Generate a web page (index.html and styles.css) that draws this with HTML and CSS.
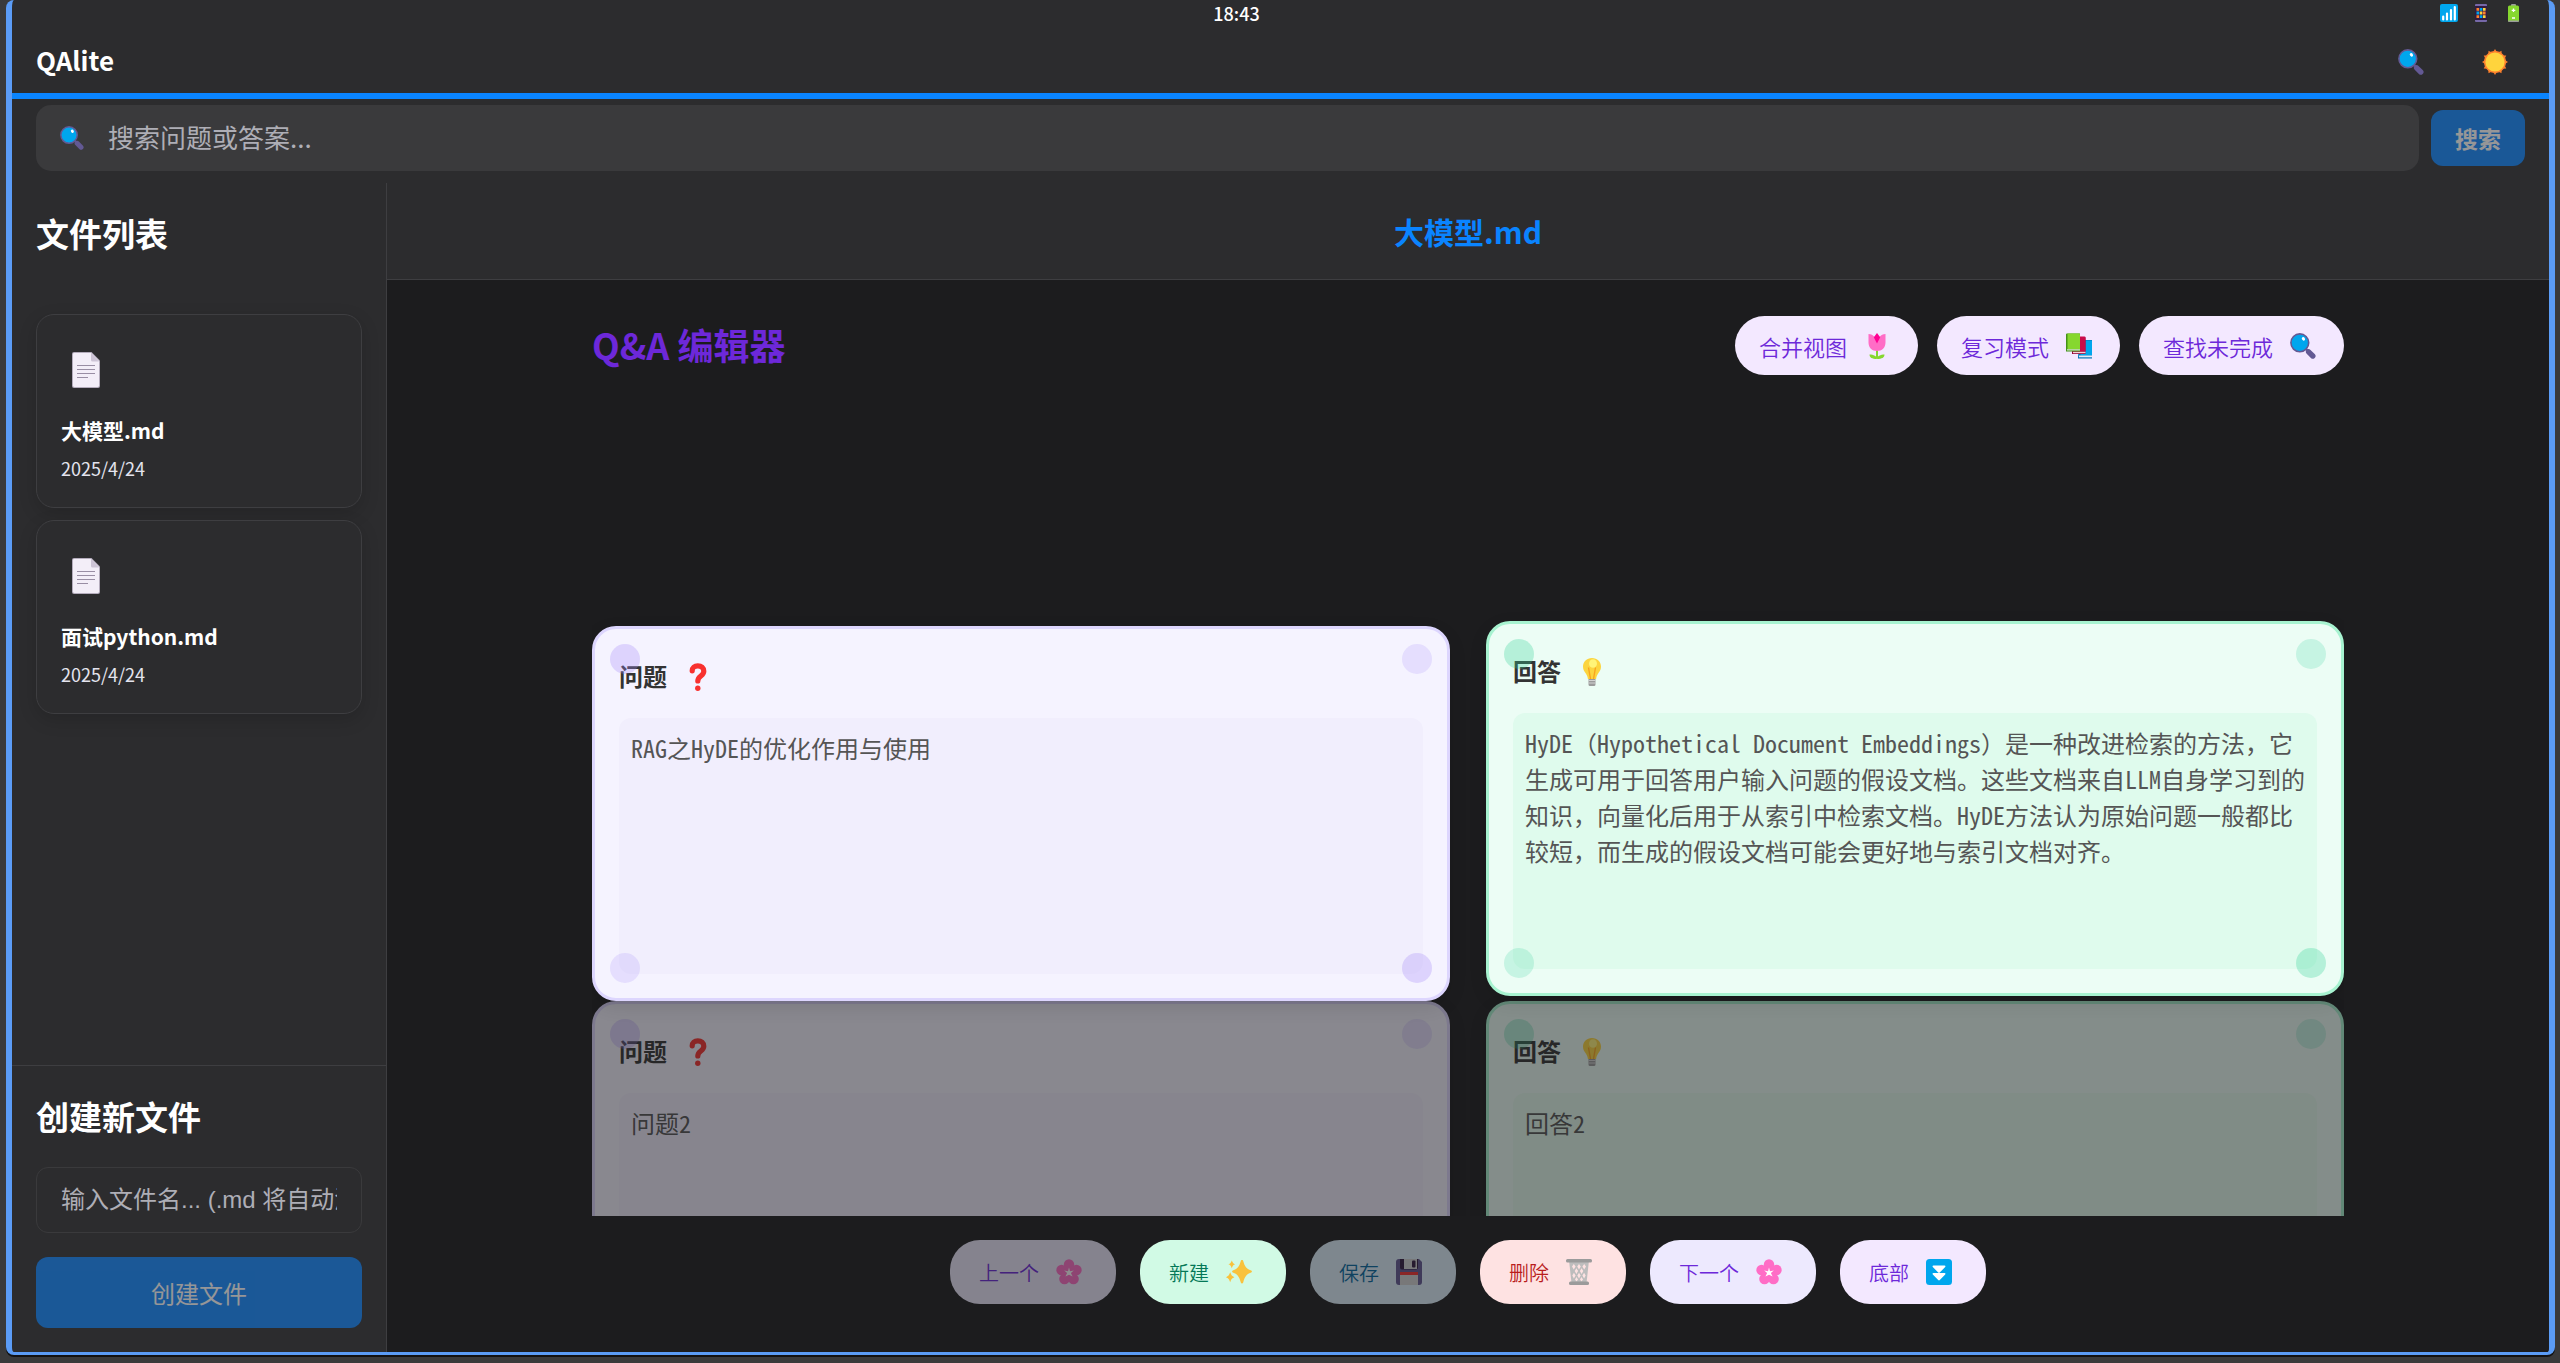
FILE: index.html
```html
<!DOCTYPE html>
<html lang="zh-CN">
<head>
<meta charset="utf-8">
<meta name="viewport" content="width=device-width, initial-scale=1">
<title>QAlite</title>
<link rel="stylesheet" href="styles.css">
</head>
<body>
<svg class="sprite" aria-hidden="true">
  <symbol id="i-search" viewBox="0 0 26 26">
    <path d="M16 16l2 2" stroke="#635994" stroke-width="2.4"/>
    <path d="M18.6 18.8l4.2 4.2" stroke="#635994" stroke-width="5.4" stroke-linecap="round"/>
    <circle cx="9.8" cy="9.8" r="8.9" fill="#00a6ed" stroke="#635994" stroke-width="1.6"/>
    <ellipse cx="13.4" cy="5.8" rx="1.5" ry="1.9" transform="rotate(-32 13.4 5.8)" fill="#fff"/>
  </symbol>
  <symbol id="i-sun" viewBox="0 0 26 26">
    <g fill="#ff822d">
      <circle cx="13" cy="13" r="11"/>
      <path d="M13 0l2.500 4h-5zM13 26l2.500-4h-5zM0 13l4-2.500v5zM26 13l-4-2.500v5z"/>
      <path d="M19.500 1.740l.17 4.710-4.340-2.500zM6.500 24.260l-.17-4.710 4.340 2.500zM1.740 6.500l4.710-.17-2.500 4.340zM24.260 19.500l-4.710.17 2.500-4.340zM24.260 6.500l-4.710-.17 2.500 4.340zM1.740 19.500l4.710.17-2.500-4.340zM6.500 1.740l-.17 4.710 4.340-2.500zM19.500 24.260l.17-4.710-4.340 2.500z"/>
    </g>
    <circle cx="13" cy="13" r="9.600" fill="#ffd43d"/>
  </symbol>
  <symbol id="i-signal" viewBox="0 0 18 18">
    <rect width="18" height="18" rx="2" fill="#00a6ed"/>
    <path d="M3.200 15.500v-3M7 15.500v-6M11 15.500V6M14.800 15.500V3" stroke="#fff" stroke-width="2.200" stroke-linecap="round"/>
  </symbol>
  <symbol id="i-phone" viewBox="0 0 12 18">
    <rect width="12" height="18" rx="1" fill="#7668a8"/>
    <rect y="2" width="12" height="14" fill="#321b41"/>
    <path d="M1.500 4h2.600v2.800H1.500zM8 7.600h2.600v2.800H8zM1.500 11.200h2.600V14H1.500z" fill="#ff822d"/>
    <path d="M4.800 4h2.600v2.800H4.800zM1.500 7.600h2.600v2.800H1.500zM4.800 11.200h2.600V14H4.800z" fill="#00a6ed"/>
    <path d="M8 4h2.600v2.800H8zM4.800 7.600h2.600v2.800H4.800zM8 11.200h2.600V14H8z" fill="#fcd53f"/>
  </symbol>
  <symbol id="i-battery" viewBox="0 0 11 18">
    <rect x="3" width="5" height="3" rx="1" fill="#9b9b9b"/>
    <rect y="1.500" width="11" height="16.500" rx="1.500" fill="#86d72f"/>
    <path d="M0 16.500h11v0a1.500 1.500 0 0 1-1.500 1.500h-8A1.500 1.500 0 0 1 0 16.500z" fill="#9b9b9b"/>
    <path d="M5.500 4.500v3.600M3.700 6.300h3.600M4 14h3" stroke="#fff" stroke-width="1.300"/>
  </symbol>
  <symbol id="i-doc" viewBox="0 0 28 36">
    <path d="M2 0h17.500L28 8.500V34a2 2 0 0 1-2 2H2a2 2 0 0 1-2-2V2a2 2 0 0 1 2-2z" fill="#b4acbc"/>
    <path d="M2 1h17l8 8v24.500a1.500 1.500 0 0 1-1.500 1.500h-23A1.500 1.500 0 0 1 1 33.500V2a1 1 0 0 1 1-1z" fill="#f3eef8"/>
    <path d="M19 1l8 8.500h-6.500A1.500 1.500 0 0 1 19 8z" fill="#cdc4d6"/>
    <path d="M5 13.500h18M5 17.500h18M5 21.500h18M5 25.500h11" stroke="#998ea4" stroke-width="1.200"/>
  </symbol>
  <symbol id="i-tulip" viewBox="0 0 26 26">
    <path d="M12 16h2v9h-2z" fill="#86d72f"/>
    <path d="M13 26c-5 0-7.500-1.500-7.500-4.500C9.500 21.500 13 23 13 26zM13 26c5 0 7.500-1.500 7.500-4.500C16.500 21.500 13 23 13 26z" fill="#86d72f"/>
    <path d="M4.500 1c2.600 0 4.500 1 6 3h5c1.500-2 3.400-3 6-3v8.500c0 5-3.500 8.500-8.500 8.500s-8.500-3.500-8.500-8.500z" fill="#ff6dc6"/>
    <path d="M13 0l3.200 4.200-3.200 6.300-3.200-6.300z" fill="#ff0093"/>
  </symbol>
  <symbol id="i-books" viewBox="0 0 26 26">
    <path d="M13 7h13v18.500H12z" fill="#0074ba"/>
    <path d="M14.500 7.500H26v15H14.500z" fill="#00a6ed"/>
    <path d="M13 22.500h13v1.800H13z" fill="#e8e8f5"/>
    <path d="M6 4h12.500a1 1 0 0 1 1 1v16H6z" fill="#990838"/>
    <path d="M8 3.500h10.500a1 1 0 0 1 1 1V18.500H8z" fill="#ca0b4a"/>
    <path d="M7 18.800h12.500v1.400H7z" fill="#f1d0db"/>
    <path d="M0 1.500a1 1 0 0 1 1-1h13V18.500H0z" fill="#44911b"/>
    <path d="M1.500.5H13a1 1 0 0 1 1 1v14.500H1.500z" fill="#86d72f"/>
    <path d="M1 16.200h13v1.300H1z" fill="#d3e8c8"/>
  </symbol>
  <symbol id="i-question" viewBox="0 0 26 28">
    <path d="M7.200 7.800c0-3 2.300-5 5.600-5 3.500 0 6 2.100 6 5.400 0 4.900-6 4.600-6 9.700" fill="none" stroke="#f8312f" stroke-width="5.200" stroke-linecap="round"/>
    <circle cx="12.800" cy="25.200" r="2.700" fill="#f8312f"/>
  </symbol>
  <symbol id="i-bulb" viewBox="0 0 26 28">
    <path d="M9.500 20h7v6.500a1.500 1.500 0 0 1-1.500 1.500h-4a1.500 1.500 0 0 1-1.500-1.500z" fill="#9b9b9b"/>
    <path d="M9.500 22.500h7M9.500 25h7" stroke="#d3d3d3" stroke-width="1"/>
    <path d="M13 0c5.200 0 9 3.700 9 8.700 0 3.300-1.700 5-3 7-1.300 1.900-1.700 3.500-1.900 5.300H8.900c-.2-1.800-.6-3.400-1.900-5.300-1.300-2-3-3.700-3-7C4 3.700 7.800 0 13 0z" fill="#fcd53f"/>
    <path d="M9.500 9.500L11.500 21M16.500 9.500L14.500 21" stroke="#f9a41f" stroke-width="1.400" fill="none"/>
    <ellipse cx="14" cy="5.500" rx="4" ry="4.300" fill="#fff478"/>
  </symbol>
  <symbol id="i-flower" viewBox="0 0 26 26">
    <g fill="#ff6dc6">
      <circle cx="13" cy="5.500" r="5.200"/><circle cx="5.600" cy="11" r="5.300"/><circle cx="20.400" cy="11" r="5.300"/>
      <circle cx="8.500" cy="20" r="5.300"/><circle cx="17.500" cy="20" r="5.300"/><circle cx="13" cy="13.500" r="6"/>
    </g>
    <path d="M13 8.500l1 3.700 3.800-.6-2.900 2.500 1.700 3.300-3.600-1.700-3.600 1.700 1.700-3.300-2.900-2.500 3.800.6z" fill="#fff"/>
  </symbol>
  <symbol id="i-sparkles" viewBox="0 0 26 26">
    <path d="M16 1c.8 0 1 .4 1.200 1 1.600 5.200 2.700 7.600 8 9.600 1 .4 1 1.600 0 2-5.300 2-6.400 4.400-8 10-.4 1.300-2 1.300-2.400 0-1.600-5.600-2.700-8-8-10-1-.4-1-1.600 0-2 5.300-2 6.400-4.400 8-9.600.2-.6.400-1 1.200-1zM5.800 1.500c1 2.600 1.400 2.900 3.400 3.800-2 .9-2.400 1.200-3.400 3.900-1-2.700-1.400-3-3.400-3.900 2-.9 2.400-1.200 3.400-3.800zM4.200 13.300c1.100 3 1.700 3.700 4.200 4.900-2.500 1.200-3.100 1.900-4.200 5-1.100-3.100-1.700-3.800-4.200-5 2.500-1.200 3.100-1.900 4.200-4.900z" fill="#f9c23c"/>
  </symbol>
  <symbol id="i-floppy" viewBox="0 0 26 26">
    <path d="M4 0h19l3 3v20a3 3 0 0 1-3 3H3a3 3 0 0 1-3-3V3a3 3 0 0 1 3-3z" fill="#635994"/>
    <path d="M4 0h18v8.500a2 2 0 0 1-2 2H6a2 2 0 0 1-2-2z" fill="#321b41"/>
    <path d="M8 0h13v10H8z" fill="#d3d3d3"/>
    <rect x="16" y="1.500" width="3.500" height="7" rx="1" fill="#321b41"/>
    <path d="M4 13.500h18V26H4z" fill="#d3d3d3"/>
    <path d="M4 13h18v3H4z" fill="#f8312f"/>
  </symbol>
  <symbol id="i-trash" viewBox="0 0 26 26">
    <path d="M3.200 3h19.600L20.500 24h-15z" fill="#bdbdbd"/>
    <path d="M6 7.500l1.800-2.500 1.800 2.500-1.800 3zM11.200 7.500L13 5l1.800 2.500-1.800 3zM16.400 7.500L18.200 5 20 7.500l-1.800 3zM8.700 12l1.700-2.700 1.700 2.700-1.700 3zM13.900 12l1.700-2.700 1.700 2.700-1.700 3zM6.300 16.500l1.600-2.700 1.700 2.700-1.700 3zM11.300 16.500l1.700-2.700 1.700 2.700-1.700 3zM16.400 16.500l1.700-2.700 1.600 2.700-1.600 3zM9 20.500l1.500-2.500 1.500 2.500-1.500 2zM14 20.500l1.500-2.500 1.500 2.500-1.500 2z" fill="#fee2e2"/>
    <rect y="0" width="26" height="3.600" rx="1.500" fill="#9b9b9b"/>
    <rect x="3" y="22.600" width="20" height="3.400" rx="1.500" fill="#9b9b9b"/>
  </symbol>
  <symbol id="i-down" viewBox="0 0 26 26">
    <rect width="26" height="26" rx="3.500" fill="#00a6ed"/>
    <path d="M7.500 6.500h11c.9 0 1.300.8.700 1.500L13.800 13.500c-.5.500-1.100.5-1.600 0L6.800 8c-.6-.7-.2-1.500.7-1.500zM7.500 14h11c.9 0 1.300.8.700 1.500L13.800 21c-.5.500-1.100.5-1.600 0l-5.400-5.500c-.6-.7-.2-1.500.7-1.500z" fill="#fff"/>
  </symbol>
</svg>

<div class="window">
  <header class="app-header">
    <div class="status-bar">
      <span></span>
      <time>18:43</time>
      <div class="status-icons">
        <span><svg width="18" height="18"><use href="#i-signal"/></svg></span>
        <span><svg width="12" height="18"><use href="#i-phone"/></svg></span>
        <span><svg width="11" height="18"><use href="#i-battery"/></svg></span>
      </div>
    </div>
    <div class="title-bar">
      <h1>QAlite</h1>
      <div class="title-actions">
        <button type="button" aria-label="搜索"><svg class="icon"><use href="#i-search"/></svg></button>
        <button type="button" aria-label="切换主题"><svg class="icon"><use href="#i-sun"/></svg></button>
      </div>
    </div>
  </header>

  <form class="search">
    <label class="search-box">
      <svg class="search-icon" role="img" aria-label="搜索"><use href="#i-search"/></svg>
      <input type="search" placeholder="搜索问题或答案...">
    </label>
    <button type="submit" disabled>搜索</button>
  </form>

  <div class="layout">
    <aside class="sidebar">
      <h2>文件列表</h2>
      <nav class="file-list">
        <a class="file-card" href="#f1">
          <span class="file-icon"><svg><use href="#i-doc"/></svg></span>
          <strong>大模型.md</strong>
          <time>2025/4/24</time>
        </a>
        <a class="file-card" href="#f2">
          <span class="file-icon"><svg><use href="#i-doc"/></svg></span>
          <strong>面试python.md</strong>
          <time>2025/4/24</time>
        </a>
      </nav>
      <form class="create">
        <h2><label for="filename">创建新文件</label></h2>
        <input id="filename" type="text" placeholder="输入文件名... (.md 将自动添加)">
        <button type="submit" disabled>创建文件</button>
      </form>
    </aside>

    <main class="main">
      <div class="file-title"><h2>大模型.md</h2></div>
      <section class="editor">
        <div class="toolbar">
          <h2>Q&amp;A 编辑器</h2>
          <div class="tools">
            <button class="pill tool" type="button">合并视图<svg class="icon"><use href="#i-tulip"/></svg></button>
            <button class="pill tool" type="button">复习模式<svg class="icon"><use href="#i-books"/></svg></button>
            <button class="pill tool" type="button">查找未完成<svg class="icon"><use href="#i-search"/></svg></button>
          </div>
        </div>

        <div class="pairs">
          <article class="pair active">
            <section class="card question">
              <h3><label for="q1">问题</label><svg><use href="#i-question"/></svg></h3>
              <textarea id="q1">RAG之HyDE的优化作用与使用</textarea>
              <i class="dot tl"></i><i class="dot tr"></i><i class="dot bl"></i><i class="dot br"></i>
            </section>
            <section class="card answer raised">
              <h3><label for="a1">回答</label><svg><use href="#i-bulb"/></svg></h3>
              <textarea id="a1">HyDE（Hypothetical Document Embeddings）是一种改进检索的方法，它生成可用于回答用户输入问题的假设文档。这些文档来自LLM自身学习到的知识，向量化后用于从索引中检索文档。HyDE方法认为原始问题一般都比较短，而生成的假设文档可能会更好地与索引文档对齐。</textarea>
              <i class="dot tl"></i><i class="dot tr"></i><i class="dot bl"></i><i class="dot br"></i>
            </section>
          </article>
          <article class="pair">
            <section class="card question">
              <h3><label for="q2">问题</label><svg><use href="#i-question"/></svg></h3>
              <textarea id="q2">问题2</textarea>
              <i class="dot tl"></i><i class="dot tr"></i><i class="dot bl"></i><i class="dot br"></i>
            </section>
            <section class="card answer">
              <h3><label for="a2">回答</label><svg><use href="#i-bulb"/></svg></h3>
              <textarea id="a2">回答2</textarea>
              <i class="dot tl"></i><i class="dot tr"></i><i class="dot bl"></i><i class="dot br"></i>
            </section>
          </article>
        </div>

        <div class="actions">
          <button class="pill nav" type="button" disabled>上一个<svg class="icon"><use href="#i-flower"/></svg></button>
          <button class="pill new" type="button">新建<svg class="icon"><use href="#i-sparkles"/></svg></button>
          <button class="pill save" type="button" disabled>保存<svg class="icon"><use href="#i-floppy"/></svg></button>
          <button class="pill delete" type="button">删除<svg class="icon"><use href="#i-trash"/></svg></button>
          <button class="pill nav" type="button">下一个<svg class="icon"><use href="#i-flower"/></svg></button>
          <button class="pill bottom" type="button">底部<svg class="icon"><use href="#i-down"/></svg></button>
        </div>
      </section>
    </main>
  </div>
</div>
</body>
</html>
```
FILE: styles.css
```css
:root {
  --surface: #2c2c2e;
  --page: #1c1c1e;
  --line: #3e3e41;
  --accent: #0a84ff;
  --muted: #aeaeb6;
}

* { box-sizing: border-box; }

body {
  margin: 0;
  height: 100vh;
  display: flex;
  flex-direction: column;
  padding: 0 5px 8px 6px;
  background: #3a3a3b;
  color: #fff;
  font-family: "Noto Sans CJK SC", sans-serif;
}

h1, h2, h3 { margin: 0; }

button, input, textarea { font: inherit; border: 0; }
button { padding: 0; cursor: pointer; }
svg { display: block; flex: none; }

.sprite { position: absolute; width: 0; height: 0; }
.icon { width: 26px; height: 26px; }

.window {
  flex: 1;
  min-height: 0;
  display: flex;
  flex-direction: column;
  border: solid #5b9cf6;
  border-width: 0 6px 3px;
  border-radius: 8px;
  box-shadow: 0 2px 0 #121213;
  background: var(--surface);
  overflow: hidden;
}

/* Header */
.app-header {
  border-bottom: 6px solid var(--accent);
  padding: 0 24px;
}
.status-bar {
  display: flex;
  justify-content: space-between;
  align-items: center;
  height: 26px;
  font-size: 18px;
  font-weight: 500;
}
.status-icons { display: flex; gap: 8px; }
.status-icons span { display: flex; justify-content: center; width: 24px; }
.title-bar {
  display: flex;
  justify-content: space-between;
  align-items: center;
  height: 67px;
}
.title-bar h1 { font-size: 26px; font-weight: 600; }
.title-actions { display: flex; gap: 24px; padding-top: 4px; }
.title-actions button {
  display: flex;
  align-items: center;
  justify-content: center;
  width: 60px;
  height: 60px;
  background: none;
}

/* Search */
.search {
  display: flex;
  align-items: center;
  gap: 12px;
  padding: 6px 24px 12px;
}
.search-box {
  flex: 1;
  display: flex;
  align-items: center;
  gap: 24px;
  height: 66px;
  padding: 0 24px;
  border-radius: 15px;
  background: #3a3a3c;
}
.search-icon { width: 24px; height: 24px; }
.search-box input {
  flex: 1;
  padding: 0 0 4px;
  background: none;
  color: #fff;
  font-size: 26px;
  outline: 0;
}
input::placeholder { color: var(--muted); opacity: 1; }
.search button {
  height: 56px;
  padding: 0 24px;
  border-radius: 12px;
  font-size: 23px;
  font-weight: 700;
}
.search button, .create button {
  background: var(--accent);
  color: #fff;
  opacity: .5;
}

/* Sidebar */
.layout { flex: 1; min-height: 0; display: flex; }
.sidebar {
  flex: none;
  width: 375px;
  display: flex;
  flex-direction: column;
  border-right: 1px solid var(--line);
}
.sidebar h2 {
  padding: 30px 24px 61px;
  font-size: 33px;
  line-height: 40px;
  font-weight: 700;
}
.file-list {
  flex: 1;
  display: flex;
  flex-direction: column;
  gap: 12px;
  padding: 0 24px;
}
.file-card {
  display: flex;
  flex-direction: column;
  padding: 24px 24px 25px;
  border: 1px solid var(--line);
  border-radius: 18px;
  box-shadow: 0 6px 18px rgba(0, 0, 0, .15);
  background: var(--surface);
  color: #fff;
  text-decoration: none;
}
.file-icon {
  display: flex;
  align-items: center;
  justify-content: center;
  width: 50px;
  height: 62px;
  margin-bottom: 13px;
}
.file-icon svg { width: 28px; height: 36px; }
.file-card strong { font-size: 21px; line-height: 32px; font-weight: 700; }
.file-card time {
  margin-top: 8px;
  font-size: 18px;
  line-height: 28px;
  color: #e4e4ee;
}
.create {
  display: flex;
  flex-direction: column;
  padding: 0 24px 24px;
  border-top: 1px solid var(--line);
}
.create h2 { padding: 30px 0 31px; }
.create input {
  height: 66px;
  margin-bottom: 24px;
  padding: 0 24px;
  border: 1px solid #3a3a3c;
  border-radius: 12px;
  background: none;
  color: #fff;
  font-family: "Liberation Sans", "Noto Sans CJK SC", sans-serif;
  font-size: 24px;
}
.create button { height: 71px; border-radius: 12px; font-size: 24px; }

/* Main */
.main {
  flex: 1;
  min-width: 0;
  display: flex;
  flex-direction: column;
  background: var(--page);
}
.file-title {
  padding: 28px 24px;
  border-bottom: 1px solid var(--line);
  background: var(--surface);
  text-align: center;
}
.file-title h2 {
  color: var(--accent);
  font-size: 30px;
  line-height: 40px;
  font-weight: 600;
}
.editor {
  flex: 1;
  min-height: 0;
  display: flex;
  flex-direction: column;
  width: 100%;
  max-width: 1800px;
  margin: 0 auto;
  padding: 36px 24px 48px;
}
.toolbar { display: flex; justify-content: space-between; align-items: center; }
.toolbar h2 {
  padding-bottom: 3px;
  color: #6d28d9;
  font-size: 36px;
  line-height: 52px;
  font-weight: 600;
}
.tools { display: flex; gap: 19px; }

.pill {
  display: flex;
  align-items: center;
  border-radius: 30px;
  font-weight: 350;
}
.pill:disabled { opacity: .5; }
.tool {
  gap: 17px;
  height: 59px;
  padding: 0 28px 0 24px;
  background: #f3e8ff;
  color: #6d28d9;
  font-size: 22px;
}

.pairs {
  flex: 1;
  min-height: 0;
  padding-top: 251px;
  overflow: hidden;
}
.pair { display: grid; grid-template-columns: 1fr 1fr; gap: 36px; opacity: .5; }
.pair.active { position: relative; z-index: 1; opacity: 1; }

.card {
  position: relative;
  display: flex;
  flex-direction: column;
  height: 375px;
  padding: 24px;
  border: 3px solid;
  border-radius: 24px;
  box-shadow: 0 6px 18px rgba(0, 0, 0, .1);
}
.question { border-color: #ddd6fe; background: #f5f3ff; --dot: #a78bfa; --field: #f1eefd; }
.answer { border-color: #a7f3d0; background: #ecfdf5; --dot: #34d399; --field: #e3fbee; }
.raised { transform: translateY(-5px); --field: #dffbed; }
.card h3 {
  display: flex;
  align-items: center;
  gap: 18px;
  height: 48px;
  margin-bottom: 17px;
  color: #333;
  font-size: 24px;
  font-weight: 600;
}
.card h3 label { padding-bottom: 3px; }
.card h3 svg { width: 26px; height: 28px; }
.card textarea {
  flex: 1;
  display: block;
  width: 100%;
  padding: 12px;
  border-radius: 12px;
  background: var(--field);
  color: #555;
  font-family: "Noto Sans Mono CJK SC", "Noto Sans CJK SC", monospace;
  font-size: 24px;
  line-height: 36px;
  font-weight: 300;
  resize: none;
  overflow: hidden;
}
.dot {
  position: absolute;
  width: 30px;
  height: 30px;
  border-radius: 50%;
  background: var(--dot);
  opacity: .3;
  pointer-events: none;
}
.tl, .tr { top: 15px; }
.bl, .br { bottom: 15px; }
.tl, .bl { left: 15px; }
.tr, .br { right: 15px; }
.tr, .bl { opacity: .2; }

.actions { display: flex; justify-content: center; gap: 24px; padding-top: 24px; }
.actions .pill {
  gap: 17px;
  height: 64px;
  padding: 0 34px 0 29px;
  font-size: 20px;
}
.nav { background: #ede9fe; color: #6d28d9; }
.new { background: #d1fae5; color: #047857; }
.save { background: #e0f2fe; color: #0369a1; }
.delete { background: #fee2e2; color: #b91c1c; }
.bottom { background: #f3e8ff; color: #6d28d9; }
```
